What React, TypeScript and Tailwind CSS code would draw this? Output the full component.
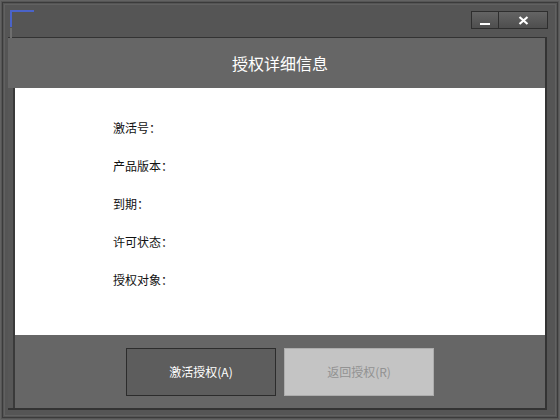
import type { FC } from "react";

const font = { fontFamily: '"Noto Sans CJK SC", "Noto Sans", sans-serif' };

const labels = ["激活号：", "产品版本：", "到期：", "许可状态：", "授权对象："];

const TitleButtons: FC = () => (
  <div className="mt-[6px] mr-[-1px] flex h-[18px] self-start">
    <button className="flex h-full w-[28px] items-end justify-center border border-[#2e2e2e] bg-gradient-to-b from-[#646464] to-[#4e4e4e] pb-[3px]">
      <span className="block h-[2px] w-[10px] bg-white" />
    </button>
    <button className="-ml-px flex h-full w-[50px] items-center justify-center border border-[#2e2e2e] bg-gradient-to-b from-[#646464] to-[#4e4e4e]">
      <svg width="11" height="9" viewBox="0 0 11 9">
        <path d="M1.5 1 L9.5 8 M9.5 1 L1.5 8" stroke="#ffffff" strokeWidth="2.2" />
      </svg>
    </button>
  </div>
);

export default function App() {
  return (
    <div className="relative h-[420px] w-[560px] border border-[#626262] bg-[#555555] p-px" style={font}>
      <div className="h-full border border-[#3b3b3b] p-px">
        <div className="flex h-full flex-col border border-[#616161] pr-[8px] pb-[5px] pl-[3px]">
          {/* title bar */}
          <div className="flex h-[32px] shrink-0 justify-end">
            <TitleButtons />
          </div>

          {/* panel */}
          <div className="flex flex-1 flex-col border-t border-r-2 border-b-2 border-[#333333]">
            <div className="flex h-[50px] shrink-0 items-center justify-center bg-[#666666] pl-[7px] text-[16px] text-white">
              授权详细信息
            </div>
            <div className="flex flex-1">
              <div className="w-[7px] shrink-0 border-r-2 border-[#3a3a3a] bg-[#575757]" />
              <div className="flex flex-1 flex-col">
                <div className="h-[247px] shrink-0 bg-white pt-[21px] pl-[98px]">
                  {labels.map((label) => (
                    <div key={label} className="flex h-[38px] items-center text-[12px] text-[#111111]">
                      {label}
                    </div>
                  ))}
                </div>
                <div className="flex flex-1 items-start justify-center gap-[8px] bg-[#666666] pt-[13px]">
                  <button className="flex h-[48px] w-[150px] items-center justify-center border border-[#2c2c2c] bg-[#5d5d5d] text-[12px] text-white">
                    激活授权(A)
                  </button>
                  <button className="flex h-[48px] w-[150px] items-center justify-center border border-[#adadad] bg-[#c4c4c4] text-[12px] text-[#929292]">
                    返回授权(R)
                  </button>
                </div>
              </div>
            </div>
          </div>
        </div>
      </div>

      {/* focus corner marker */}
      <div className="absolute top-[9px] left-[9px] h-[17px] w-[24px] border-t-2 border-l-2 border-[#4a63c8]" />
      <div className="absolute top-[27px] left-[9px] h-[10px] w-[2px] bg-[#6e6e6e]" />
    </div>
  );
}
